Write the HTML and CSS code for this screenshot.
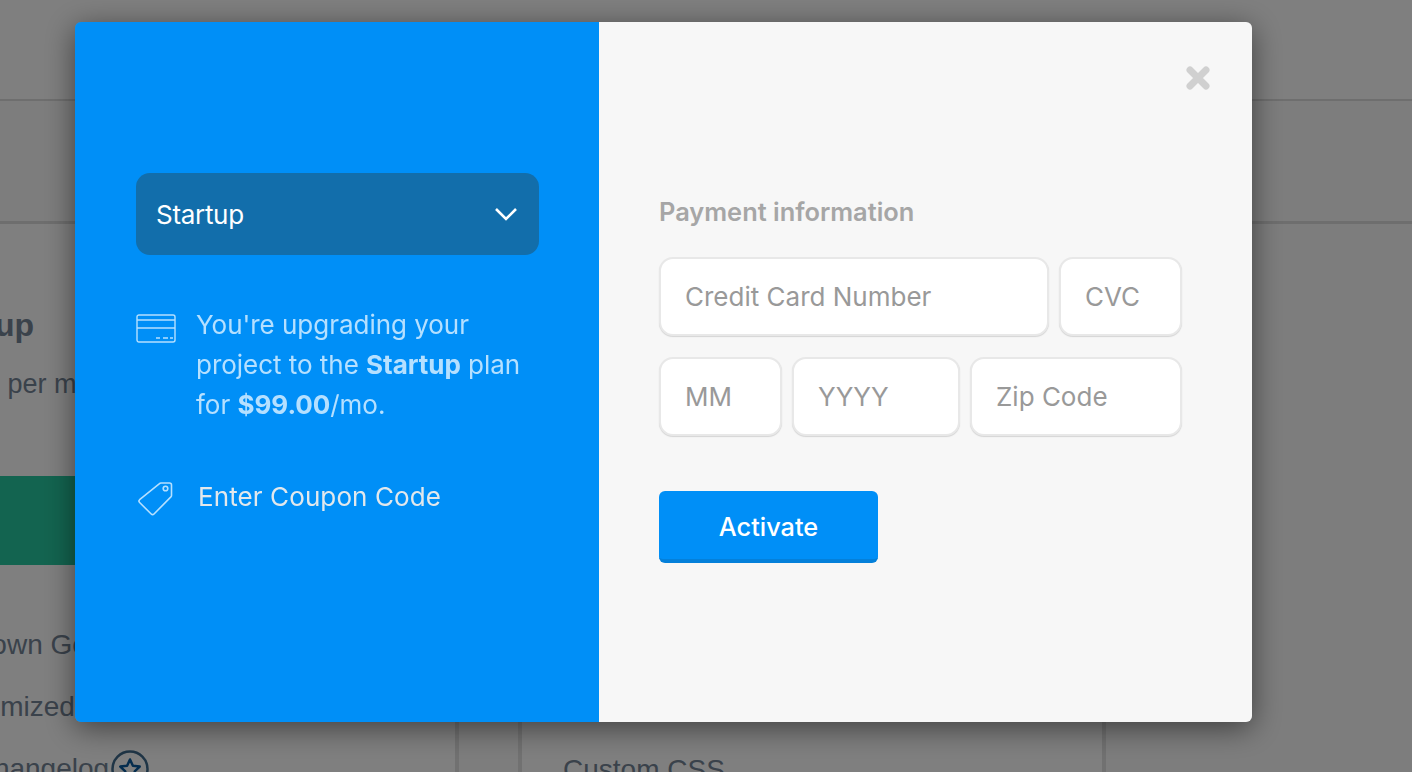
FILE: index.html
```html
<!DOCTYPE html>
<html lang="en">
<head>
<meta charset="utf-8">
<title>Upgrade project</title>
<link rel="stylesheet" href="styles.css">
</head>
<body>
<div class="page">
  <div class="topbar"></div>
  <div class="subbar"></div>
  <div class="plans">
    <section class="plan plan-left">
      <h2 class="plan-name">Startup</h2>
      <p class="plan-price">$99 per month</p>
      <div class="plan-cta"></div>
      <ul class="plan-list">
        <li>Your own Google Analytics</li>
        <li>Customized Branding and more</li>
        <li class="star-row">Full changelog
          <svg class="star" width="38" height="38" viewBox="0 0 38 38"><circle cx="19" cy="19" r="17.5" fill="none" stroke="#3f6a8c" stroke-width="2.5"/><path d="M19 9.5l2.9 6.3 6.8.8-5 4.7 1.3 6.8-6-3.4-6 3.4 1.3-6.8-5-4.7 6.8-.8z" fill="none" stroke="#0a5a9c" stroke-width="2.5" stroke-linejoin="round"/></svg>
        </li>
      </ul>
    </section>
    <section class="plan plan-right">
      <ul class="plan-list"><li>Custom CSS</li></ul>
    </section>
  </div>
</div>
<div class="overlay"></div>
<div class="modal">
  <div class="pane-left">
    <div class="select">
      <span>Startup</span>
      <svg width="24" height="16" viewBox="0 0 24 16"><path d="M2 3l10 10L22 3" fill="none" stroke="#fff" stroke-width="2.6"/></svg>
    </div>
    <div class="summary">
      <svg class="card-icon" width="40" height="29" viewBox="0 0 40 29" fill="none" stroke="#b5e0ff" stroke-width="1.4"><rect x="1" y="1" width="38" height="27" rx="2"/><path d="M1 6h38M1 14h38"/><path d="M20 24h4M27 24h5M34 24h3"/></svg>
      <p>You're upgrading your project to the <b>Startup</b> plan for <b>$99.00</b>/mo.</p>
    </div>
    <div class="coupon">
      <svg class="tag-icon" width="36" height="36" viewBox="0 0 36 36" fill="none" stroke="#b5e0ff" stroke-width="1.6" stroke-linejoin="round"><path d="M24 2h8.500a2 2 0 0 1 2 2v10.500a2 2 0 0 1-.6 1.400L17 33a2 2 0 0 1-2.800 0L2.600 21.500a2 2 0 0 1 0-2.800L22.500 2.600A2 2 0 0 1 24 2z"/><circle cx="28.500" cy="7.500" r="2.300"/></svg>
      <span>Enter Coupon Code</span>
    </div>
  </div>
  <div class="pane-right">
    <svg class="close" width="26" height="26" viewBox="0 0 26 26"><path d="M5 5l16 16M21 5L5 21" stroke="#d0d0d0" stroke-width="7" stroke-linecap="round"/></svg>
    <h3 class="form-title">Payment information</h3>
    <div class="row">
      <div class="field f-card">Credit Card Number</div>
      <div class="field f-cvc">CVC</div>
    </div>
    <div class="row">
      <div class="field f-mm">MM</div>
      <div class="field f-yy">YYYY</div>
      <div class="field f-zip">Zip Code</div>
    </div>
    <button class="activate" type="button">Activate</button>
  </div>
</div>
</body>
</html>
```
FILE: styles.css
```css
* { box-sizing: border-box; }
html, body { margin: 0; height: 100%; overflow: hidden; }
body { background: #fff; font-family: "Inter", "Liberation Sans", sans-serif; }
.page { height: 772px; overflow: hidden; }
.topbar { height: 101px; border-bottom: 2px solid #ddd; background: #fff; }
.subbar { height: 123px; border-bottom: 3px solid #ddd; background: #fafafa; }
.plans { display: flex; height: 548px; background: #fafafa; overflow: hidden; }
.plan { flex: none; background: #fff; border-right: 4px solid #e2e2e2; font-family: "Liberation Sans", sans-serif; color: #748496; }
.plan-left { width: 459px; padding-top: 81px; margin-right: 59px; }
.plan-right { width: 588px; border-left: 4px solid #e2e2e2; }
.plan-name { margin: 0 0 0 -78px; font-size: 32px; line-height: 40px; font-weight: 700; white-space: nowrap; }
.plan-price { margin: 21px 0 0 -45px; font-size: 27px; line-height: 36px; white-space: nowrap; }
.plan-cta { height: 89px; margin: 74px 0 0 0; background: #27c9a0; }
.plan-list { list-style: none; margin: 0; padding: 0; font-size: 28px; line-height: 62px; white-space: nowrap; }
.plan-left .plan-list { margin: 49px 0 0 -73px; }
.plan-right .plan-list { padding: 515px 0 0 41px; }
.star-row { display: flex; align-items: center; gap: 2px; }
.overlay { position: fixed; inset: 0; background: rgba(0,0,0,.5); }
.modal { position: fixed; left: 75px; top: 22px; width: 1177px; height: 700px; display: flex; border-radius: 6px; overflow: hidden; box-shadow: 0 6px 30px rgba(0,0,0,.5); }
.pane-left { width: 524px; background: #008ff7; padding: 151px 60px 0 61px; color: #b5e0ff; }
.select { height: 82px; border-radius: 14px; background: #126eab; color: #fff; display: flex; align-items: center; justify-content: space-between; padding: 0 21px 0 20px; font-size: 26px; letter-spacing: -.3px; }
.summary { display: flex; margin-top: 50px; }
.card-icon { flex: none; margin: 9px 20px 0 0; }
.summary p { margin: 0; font-size: 26px; line-height: 40px; letter-spacing: -.03px; }
.summary b { font-weight: 700; }
.coupon { display: flex; align-items: center; margin-top: 52px; color: #e2e8ec; font-size: 26px; line-height: 40px; letter-spacing: .1px; }
.tag-icon { flex: none; margin: 4px 25px 0 1px; }
.pane-right { position: relative; flex: 1; background: #f7f7f7; padding: 170px 70px 0 60px; }
.close { position: absolute; top: 43px; right: 41px; }
.form-title { margin: 0 0 25px; font-size: 25.4px; line-height: 40px; font-weight: 600; color: #a6a6a6; }
.row { display: flex; gap: 10px; margin-bottom: 21px; }
.field { height: 79px; background: #fff; border: 2px solid #e8e8e8; border-radius: 14px; padding: 0 24px 1px; display: flex; align-items: center; font-size: 26px; color: #999; box-shadow: 0 1px 1px #d4d4d4; }
.f-card { width: 390px; }
.f-cvc { width: 123px; }
.f-mm { width: 123px; }
.f-yy { width: 168px; }
.f-zip { width: 212px; }
.activate { display: block; width: 219px; height: 72px; margin-top: 55px; padding-top: 3px; background: #008ff7; border: 0; border-bottom: 4px solid #0480da; border-radius: 6px; color: #fff; font: 500 25.3px "Inter", "Liberation Sans", sans-serif; }
```
